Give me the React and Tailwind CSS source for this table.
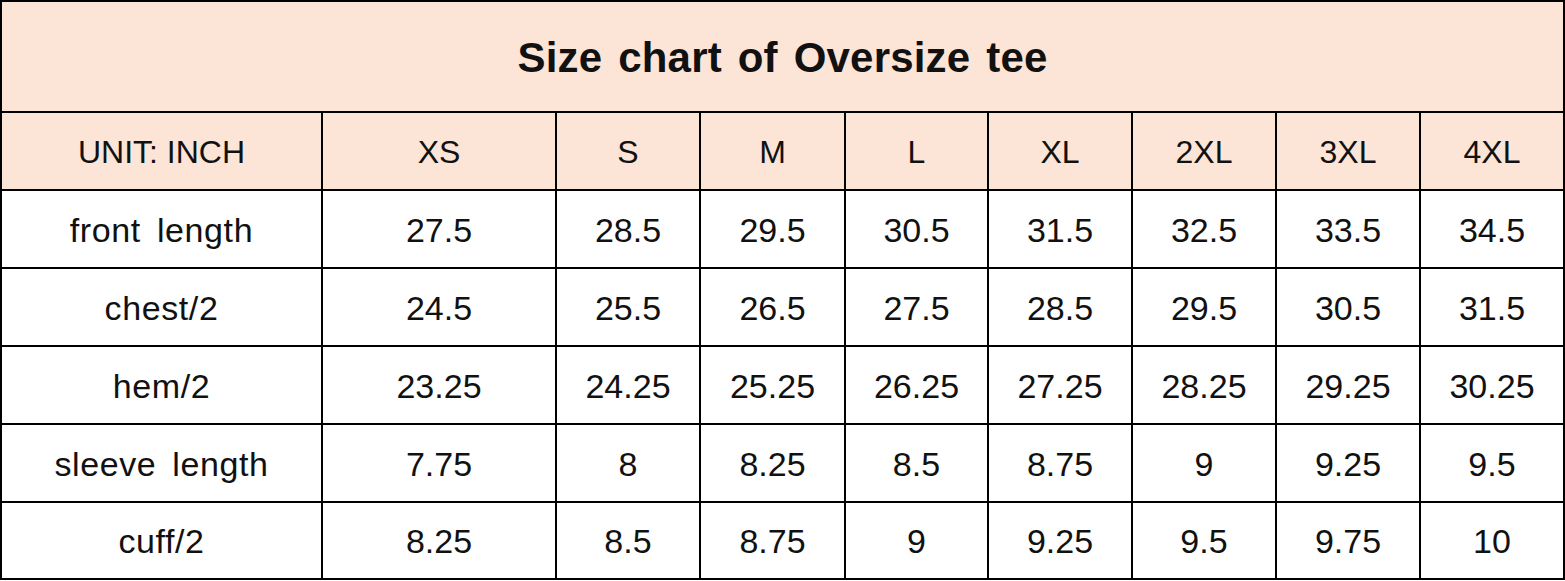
import React from 'react';

const SIZES = ['XS', 'S', 'M', 'L', 'XL', '2XL', '3XL', '4XL'];

const ROWS = [
  ['front length', '27.5', '28.5', '29.5', '30.5', '31.5', '32.5', '33.5', '34.5'],
  ['chest/2', '24.5', '25.5', '26.5', '27.5', '28.5', '29.5', '30.5', '31.5'],
  ['hem/2', '23.25', '24.25', '25.25', '26.25', '27.25', '28.25', '29.25', '30.25'],
  ['sleeve length', '7.75', '8', '8.25', '8.5', '8.75', '9', '9.25', '9.5'],
  ['cuff/2', '8.25', '8.5', '8.75', '9', '9.25', '9.5', '9.75', '10'],
];

export default function App() {
  return (
    <div className="w-[1565px] h-[581px] bg-white" style={{ fontFamily: '"Liberation Sans", Arial, sans-serif' }}>
      <div className="grid bg-black gap-[2px] p-[2px] w-[1565px] grid-cols-[319px_232px_142px_143px_141px_142px_142px_142px_142px] grid-rows-[109px_76px_76px_76px_76px_76px_75px] text-[#111]">
        <div className="col-span-9 bg-[#fce4d6] flex items-center justify-center text-[42px] font-bold tracking-[0.2px] [word-spacing:4px] pt-[1px]">
          Size chart of Oversize tee
        </div>
        <div className="bg-[#fce4d6] flex items-center justify-center text-[32px] pt-[2px]">UNIT: INCH</div>
        {SIZES.map((s) => (
          <div key={s} className="bg-[#fce4d6] flex items-center justify-center text-[32px] pt-[2px]">{s}</div>
        ))}
        {ROWS.map((row) =>
          row.map((cell, i) => (
            <div
              key={row[0] + i}
              className={
                i === 0
                  ? 'bg-white flex items-center justify-center text-[34px] tracking-[0.6px] [word-spacing:6px] pt-[2px]'
                  : 'bg-white flex items-center justify-center text-[34px] pt-[2px]'
              }
            >
              {cell}
            </div>
          ))
        )}
      </div>
    </div>
  );
}
